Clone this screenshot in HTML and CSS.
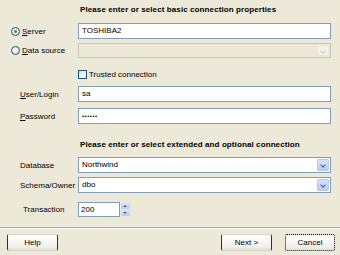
FILE: index.html
```html
<!DOCTYPE html>
<html lang="en">
<head>
    <meta charset="UTF-8">
    <title>Connection Properties</title>
    <link rel="stylesheet" href="styles.css">
</head>
<body>
    <div class="dialog">
        <h2 class="section-title">Please enter or select basic connection properties</h2>

        <div class="row row-server">
            <label class="radio-label"><span class="radio checked"></span><span><u>S</u>erver</span></label>
            <div class="field"><div class="textbox">TOSHIBA2</div></div>
        </div>
        <div class="row row-source">
            <label class="radio-label"><span class="radio"></span><span><u>D</u>ata source</span></label>
            <div class="field">
                <div class="combo disabled"><span class="combo-text"></span><span class="drop-btn"></span></div>
            </div>
        </div>
        <div class="row row-trusted">
            <span class="label"></span>
            <label class="check-label"><span class="checkbox"></span><span>Trusted connection</span></label>
        </div>
        <div class="row row-user">
            <span class="label"><u>U</u>ser/Login</span>
            <div class="field"><div class="textbox">sa</div></div>
        </div>
        <div class="row row-pass">
            <span class="label"><u>P</u>assword</span>
            <div class="field"><div class="textbox password">&bull;&bull;&bull;&bull;&bull;&bull;</div></div>
        </div>

        <h2 class="section-title second">Please enter or select extended and optional connection</h2>

        <div class="row row-db">
            <span class="label">Database</span>
            <div class="field">
                <div class="combo"><span class="combo-text">Northwind</span><span class="drop-btn"></span></div>
            </div>
        </div>
        <div class="row row-schema">
            <span class="label">Schema/Owner</span>
            <div class="field">
                <div class="combo"><span class="combo-text">dbo</span><span class="drop-btn"></span></div>
            </div>
        </div>
        <div class="row row-trans">
            <span class="label label-trans">Transaction</span>
            <div class="spin">
                <div class="textbox spin-box">200</div>
                <div class="spin-btns">
                    <span class="spin-up"></span>
                    <span class="spin-down"></span>
                </div>
            </div>
        </div>

        <div class="separator"></div>

        <div class="buttons">
            <button class="btn">Help</button>
            <div class="buttons-right">
                <button class="btn">Next &gt;</button>
                <button class="btn focused">Cancel</button>
            </div>
        </div>
    </div>
</body>
</html>
```

FILE: styles.css
```css
* {
    margin: 0;
    padding: 0;
    box-sizing: border-box;
}

body {
    background: #ece9d8;
    color: #000000;
    font-family: 'Liberation Sans', Arial, sans-serif;
    font-size: 8px;
    width: 340px;
    height: 255px;
    overflow: hidden;
}

.dialog {
    padding-top: 4px;
}

.section-title {
    font-size: 8px;
    font-weight: bold;
    line-height: 12px;
    padding-left: 80px;
    letter-spacing: 0.1px;
}

.section-title.second {
    margin-top: 15px;
}

.row {
    display: flex;
    align-items: center;
}

.label,
.radio-label {
    width: 78px;
    flex: none;
    padding-left: 20px;
    white-space: nowrap;
}

.radio-label {
    display: flex;
    align-items: center;
    padding-left: 11px;
    gap: 2px;
}

.label-trans {
    padding-left: 23px;
}

.field {
    width: 253px;
}

.row-server { margin-top: 7px; height: 16px; }
.row-source { margin-top: 4px; height: 15px; }
.row-trusted { margin-top: 11px; height: 11px; }
.row-user { margin-top: 6px; height: 16px; }
.row-pass { margin-top: 6px; height: 16px; }
.row-db { margin-top: 6px; height: 16px; }
.row-schema { margin-top: 4px; height: 16px; }
.row-trans { margin-top: 9px; height: 15px; }

.textbox {
    height: 16px;
    background: #ffffff;
    border: 1px solid #7f9db9;
    padding: 0 3px;
    line-height: 14px;
    white-space: nowrap;
}

.row-source .combo {
    height: 15px;
}

.password {
    font-size: 6px;
    letter-spacing: 0.5px;
}

/* radio and checkbox in the XP look */
.radio {
    width: 9px;
    height: 9px;
    border-radius: 50%;
    border: 1px solid #1c5180;
    background: radial-gradient(circle at 40% 35%, #ffffff, #dcdbd3);
    position: relative;
}

.radio.checked::after {
    content: '';
    position: absolute;
    left: 2px;
    top: 2px;
    width: 3px;
    height: 3px;
    border-radius: 50%;
    background: #21a121;
}

.check-label {
    display: flex;
    align-items: center;
    gap: 2px;
    white-space: nowrap;
}

.checkbox {
    width: 9px;
    height: 9px;
    border: 1px solid #1c5180;
    background: linear-gradient(135deg, #dcdcd7, #ffffff);
}

/* combo boxes */
.combo {
    height: 16px;
    display: flex;
    background: #ffffff;
    border: 1px solid #7f9db9;
    padding: 1px;
}

.combo-text {
    flex: 1;
    padding-left: 2px;
    line-height: 12px;
}

.drop-btn {
    width: 12px;
    flex: none;
    border: 1px solid #b7c9f3;
    border-radius: 1px;
    background: linear-gradient(#d7e3fd, #b6cbf8);
    position: relative;
}

.drop-btn::after {
    content: '';
    position: absolute;
    left: 3px;
    top: 3px;
    width: 3px;
    height: 3px;
    border-right: 1.5px solid #4d6185;
    border-bottom: 1.5px solid #4d6185;
    transform: rotate(45deg);
}

.combo.disabled {
    border-color: #c9c7ba;
    background: #ece9d8;
}

.combo.disabled .drop-btn {
    border-color: #e8e6dc;
    background: #f3f1e9;
}

.combo.disabled .drop-btn::after {
    border-color: #c9c7ba;
}

/* spinner */
.spin {
    display: flex;
    gap: 1px;
}

.spin-box {
    width: 42px;
    height: 15px;
    line-height: 13px;
    padding-left: 2px;
}

.spin-btns {
    width: 9px;
    display: flex;
    flex-direction: column;
    gap: 1px;
    padding: 1px 0;
}

.spin-up,
.spin-down {
    flex: 1;
    border-radius: 1px;
    background: linear-gradient(#d7e3fd, #b6cbf8);
    position: relative;
}

.spin-up::after,
.spin-down::after {
    content: '';
    position: absolute;
    left: 2px;
    width: 0;
    height: 0;
    border-left: 2px solid transparent;
    border-right: 2px solid transparent;
}

.spin-up::after {
    top: 2px;
    border-bottom: 2px solid #4d6185;
}

.spin-down::after {
    top: 2px;
    border-top: 2px solid #4d6185;
}

.separator {
    margin-top: 10px;
    height: 2px;
    border-top: 1px solid #aca899;
    border-bottom: 1px solid #ffffff;
}

.buttons {
    margin-top: 5px;
    display: flex;
    justify-content: space-between;
    padding: 0 5px 0 7px;
}

.buttons-right {
    display: flex;
    gap: 13px;
}

.btn {
    width: 51px;
    height: 17px;
    font-family: 'Liberation Sans', Arial, sans-serif;
    font-size: 8px;
    color: #000000;
    background: linear-gradient(#ffffff, #f0efe8 80%, #e3e0d2);
    border: 1px solid;
    border-color: #d6d3c8 #003c74;
    border-radius: 2px;
}

.btn.focused {
    border: 1px dotted #000000;
    width: 50px;
}
```
